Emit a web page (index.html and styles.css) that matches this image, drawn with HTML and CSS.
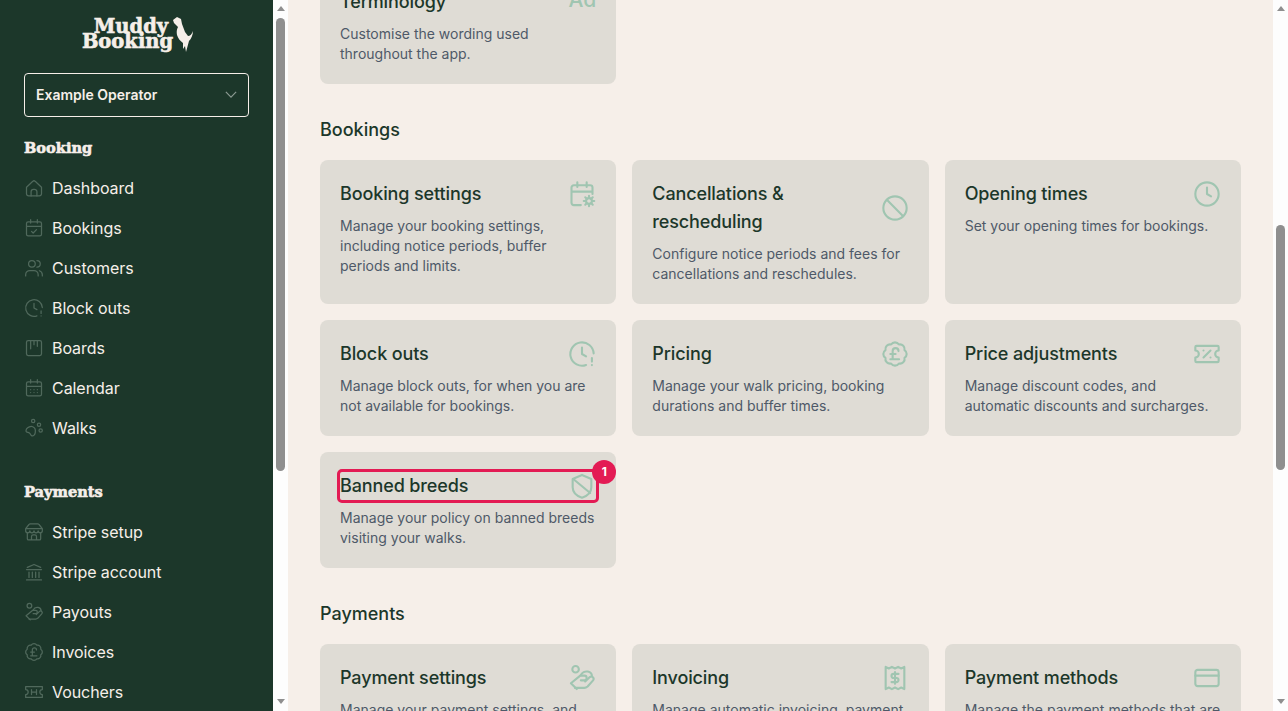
FILE: index.html
```html
<!DOCTYPE html>
<html lang="en">
<head>
  <meta charset="UTF-8" />
  <meta name="viewport" content="width=device-width, initial-scale=1.0"/>
  <title>Settings - Muddy Booking</title>
  <link rel="stylesheet" href="styles.css">
</head>
<body>

<svg class="sprite" xmlns="http://www.w3.org/2000/svg">
  <symbol id="i-home" viewBox="0 0 24 24"><path d="M3 11l7.6-7a2 2 0 0 1 2.8 0l7.6 7v8a2.5 2.5 0 0 1-2.5 2.5h-13A2.5 2.5 0 0 1 3 19z"/><path d="M8.5 21.500v-5a3 3 0 0 1 3-3h1a3 3 0 0 1 3 3v5"/></symbol>
  <symbol id="i-calendar-check" viewBox="0 0 24 24"><rect x="3" y="4.500" width="18" height="17" rx="2"/><path d="M8 2v4M16 2v4M3 10h18M9 16l2 2 4-4"/></symbol>
  <symbol id="i-users" viewBox="0 0 24 24"><circle cx="9.500" cy="7" r="4"/><path d="M2 21.500v-1.500a5 5 0 0 1 5-5h5a5 5 0 0 1 5 5v1.500M15.500 3a4 4 0 0 1 0 8M22 21.500v-1.500a5 5 0 0 0-3.500-4.700"/></symbol>
  <symbol id="i-clock-alert" viewBox="0 0 24 24"><path d="M22 11.500A10 10 0 1 0 15.500 21.400"/><path d="M12 6.500v5.500l3.500 2M20.500 15.500v3M20.500 21.500v.01"/></symbol>
  <symbol id="i-board" viewBox="0 0 24 24"><rect x="3" y="3" width="18" height="18" rx="2"/><path d="M8 3v10M12 3v5M16 3v7"/></symbol>
  <symbol id="i-calendar" viewBox="0 0 24 24"><rect x="3" y="4.500" width="18" height="17" rx="2"/><path d="M8 2v4M16 2v4M3 10h18M8 14h.01M12 14h.01M16 14h.01M8 17.500h.01M12 17.500h.01M16 17.500h.01"/></symbol>
  <symbol id="i-paw" viewBox="0 0 24 24"><circle cx="11" cy="3.500" r="2"/><circle cx="18" cy="8" r="2"/><circle cx="20" cy="15" r="2"/><path d="M3 13c1.500-2 5-3.500 7.500-2.500 2.500 1 3.500 4 3 7-.4 2.500-2 4.500-4 4-1.500-.4-1.500-2.500-3-3.500-1.500-1-3.500-.5-4-2-.3-1 .2-2 .5-3z"/></symbol>
  <symbol id="i-store" viewBox="0 0 24 24"><path d="M2 8l4-5a2 2 0 0 1 1.500-.8h9A2 2 0 0 1 18 3l4 5v2.500a2.500 2.500 0 0 1-5 0 2.500 2.500 0 0 1-5 0 2.500 2.500 0 0 1-5 0 2.500 2.500 0 0 1-5 0zM2 8h20"/><path d="M4 13v7a1.500 1.500 0 0 0 1.500 1.500h13A1.500 1.500 0 0 0 20 20v-7M9 21.500v-4a2 2 0 0 1 2-2h2a2 2 0 0 1 2 2v4"/></symbol>
  <symbol id="i-bank" viewBox="0 0 24 24"><path d="M3 21.500h18M3 9h18M4 6.500L12 3l8 3.500M6 12v6.500M10 12v6.500M14 12v6.500M18 12v6.500"/></symbol>
  <symbol id="i-hand-coin" viewBox="0 0 24 24"><circle cx="6.500" cy="4.500" r="2.800"/><path d="M2.500 16.500l5 5M2.500 16.500l8-6.500h3.500a2 2 0 0 1 0 4h-3"/><path d="M6 20.500h8c1.200 0 2-.5 2.800-1.200l4.700-5.300a2 2 0 0 0-2.800-2.800l-4 3.800"/><path d="M11 9.500c1-2 3.500-3.500 6-3 2 .4 3.500 2 3.500 4"/></symbol>
  <symbol id="i-pound-badge" viewBox="0 0 24 24"><path d="M3.850 8.620a4 4 0 0 1 4.780-4.770 4 4 0 0 1 6.740 0 4 4 0 0 1 4.780 4.780 4 4 0 0 1 0 6.740 4 4 0 0 1-4.770 4.780 4 4 0 0 1-6.750 0 4 4 0 0 1-4.780-4.770 4 4 0 0 1 0-6.760Z"/><path d="M8 12h4.500M10 16.500V9.500a2.500 2.500 0 0 1 5 0M8 16.500h7.500"/></symbol>
  <symbol id="i-ticket" viewBox="0 0 24 24"><path d="M2 9a3 3 0 0 1 0 6v3.500h20V15a3 3 0 0 1 0-6V5.500H2z"/><path d="M9 9v6M15 9v6M9 12h6"/></symbol>
  <symbol id="i-calendar-gear" viewBox="0 0 24 24"><path d="M8 2v4M16 2v4M3 10h18M11 21.500H5a2 2 0 0 1-2-2V6.500a2 2 0 0 1 2-2h14a2 2 0 0 1 2 2V12"/><circle cx="18" cy="18" r="2.500"/><path d="M18 13.500v2M18 20.500v2M13.500 18h2M20.500 18h2M14.800 14.800l1.400 1.400M19.800 19.800l1.400 1.400M14.800 21.200l1.400-1.400M19.800 16.200l1.400-1.400"/></symbol>
  <symbol id="i-ban" viewBox="0 0 24 24"><circle cx="12" cy="12" r="10"/><path d="M5 5l14 14"/></symbol>
  <symbol id="i-clock" viewBox="0 0 24 24"><circle cx="12" cy="12" r="10"/><path d="M12 6.500V12l3.500 2"/></symbol>
  <symbol id="i-ticket-percent" viewBox="0 0 24 24"><path d="M2 9a3 3 0 0 1 0 6v3a1 1 0 0 0 1 1h18a1 1 0 0 0 1-1v-3a3 3 0 0 1 0-6V6a1 1 0 0 0-1-1H3a1 1 0 0 0-1 1z"/><path d="M9 9h.01M15 9l-6 6M15 15h.01"/></symbol>
  <symbol id="i-shield-off" viewBox="0 0 24 24"><path d="M12 2.500l8 3.500v7c0 4.500-3.500 7.500-8 9-4.500-1.500-8-4.500-8-9V6z"/><path d="M4.500 6L19 18"/></symbol>
  <symbol id="i-receipt" viewBox="0 0 24 24"><path d="M4 2.500l2.670 1.300 2.670-1.300L12 3.800l2.670-1.300 2.670 1.300L20 2.500v19l-2.660-1.300-2.670 1.300L12 20.200l-2.660 1.300-2.670-1.300L4 21.500z"/><path d="M15 8.500h-4.250a1.750 1.750 0 0 0 0 3.500h2.500a1.750 1.750 0 0 1 0 3.500H9M12 7v10"/></symbol>
  <symbol id="i-card" viewBox="0 0 24 24"><rect x="2" y="5" width="20" height="14" rx="2"/><path d="M2 10h20"/></symbol>
</svg>

<div class="app">
  <aside class="sidebar">
    <div class="logo">
      <div class="logo-text">
        <span class="logo-line">Muddy</span>
        <span class="logo-line">Booking</span>
      </div>
      <svg class="logo-dog" viewBox="0 0 21 35"><path d="M1 3l4-3 4 2 1 5 3 8 3 4c2 0 4-2 5-5 0 4-2 8-4 10l-3 11-1-6-2 3v-6c-3-2-5-5-6-8-.5-3-.5-5 1-8L2 6z"/></svg>
    </div>

    <button class="operator-select">
      <span>Example Operator</span>
      <svg class="chevron" viewBox="0 0 14 8"><path d="M1 1l6 6 6-6"/></svg>
    </button>

    <h3 class="nav-title nav-title-first">Booking</h3>
    <nav class="nav-list">
      <a class="nav-item"><svg class="nav-icon"><use href="#i-home"/></svg>Dashboard</a>
      <a class="nav-item"><svg class="nav-icon"><use href="#i-calendar-check"/></svg>Bookings</a>
      <a class="nav-item"><svg class="nav-icon"><use href="#i-users"/></svg>Customers</a>
      <a class="nav-item"><svg class="nav-icon"><use href="#i-clock-alert"/></svg>Block outs</a>
      <a class="nav-item"><svg class="nav-icon"><use href="#i-board"/></svg>Boards</a>
      <a class="nav-item"><svg class="nav-icon"><use href="#i-calendar"/></svg>Calendar</a>
      <a class="nav-item"><svg class="nav-icon"><use href="#i-paw"/></svg>Walks</a>
    </nav>

    <h3 class="nav-title">Payments</h3>
    <nav class="nav-list">
      <a class="nav-item"><svg class="nav-icon"><use href="#i-store"/></svg>Stripe setup</a>
      <a class="nav-item"><svg class="nav-icon"><use href="#i-bank"/></svg>Stripe account</a>
      <a class="nav-item"><svg class="nav-icon"><use href="#i-hand-coin"/></svg>Payouts</a>
      <a class="nav-item"><svg class="nav-icon"><use href="#i-pound-badge"/></svg>Invoices</a>
      <a class="nav-item"><svg class="nav-icon"><use href="#i-ticket"/></svg>Vouchers</a>
    </nav>
  </aside>

  <div class="scrollbar">
    <span class="scroll-arrow scroll-arrow-up"></span>
    <div class="scroll-track">
      <div class="scroll-thumb scroll-thumb-side"></div>
    </div>
    <span class="scroll-arrow scroll-arrow-down"></span>
  </div>

  <main class="main">
    <div class="settings">
      <section class="settings-section">
        <div class="card-grid">
          <div class="card">
            <div class="card-head">
              <h4 class="card-title">Terminology</h4>
              <span class="card-glyph">Ad</span>
            </div>
            <p class="card-text">Customise the wording used throughout the app.</p>
          </div>
        </div>
      </section>

      <section class="settings-section">
        <h2 class="section-title">Bookings</h2>
        <div class="card-grid">
          <div class="card">
            <div class="card-head">
              <h4 class="card-title">Booking settings</h4>
              <svg class="card-icon"><use href="#i-calendar-gear"/></svg>
            </div>
            <p class="card-text">Manage your booking settings, including notice periods, buffer periods and limits.</p>
          </div>
          <div class="card">
            <div class="card-head">
              <h4 class="card-title">Cancellations &amp; rescheduling</h4>
              <svg class="card-icon"><use href="#i-ban"/></svg>
            </div>
            <p class="card-text">Configure notice periods and fees for cancellations and reschedules.</p>
          </div>
          <div class="card">
            <div class="card-head">
              <h4 class="card-title">Opening times</h4>
              <svg class="card-icon"><use href="#i-clock"/></svg>
            </div>
            <p class="card-text">Set your opening times for bookings.</p>
          </div>
          <div class="card">
            <div class="card-head">
              <h4 class="card-title">Block outs</h4>
              <svg class="card-icon"><use href="#i-clock-alert"/></svg>
            </div>
            <p class="card-text">Manage block outs, for when you are not available for bookings.</p>
          </div>
          <div class="card">
            <div class="card-head">
              <h4 class="card-title">Pricing</h4>
              <svg class="card-icon"><use href="#i-pound-badge"/></svg>
            </div>
            <p class="card-text">Manage your walk pricing, booking durations and buffer times.</p>
          </div>
          <div class="card">
            <div class="card-head">
              <h4 class="card-title">Price adjustments</h4>
              <svg class="card-icon"><use href="#i-ticket-percent"/></svg>
            </div>
            <p class="card-text">Manage discount codes, and automatic discounts and surcharges.</p>
          </div>
          <div class="card card-flagged">
            <div class="card-head card-head-flagged">
              <h4 class="card-title">Banned breeds</h4>
              <svg class="card-icon"><use href="#i-shield-off"/></svg>
            </div>
            <p class="card-text">Manage your policy on banned breeds visiting your walks.</p>
            <span class="badge">1</span>
          </div>
        </div>
      </section>

      <section class="settings-section">
        <h2 class="section-title">Payments</h2>
        <div class="card-grid">
          <div class="card">
            <div class="card-head">
              <h4 class="card-title">Payment settings</h4>
              <svg class="card-icon"><use href="#i-hand-coin"/></svg>
            </div>
            <p class="card-text">Manage your payment settings, and payouts.</p>
          </div>
          <div class="card">
            <div class="card-head">
              <h4 class="card-title">Invoicing</h4>
              <svg class="card-icon"><use href="#i-receipt"/></svg>
            </div>
            <p class="card-text">Manage automatic invoicing, payment terms and reminders.</p>
          </div>
          <div class="card">
            <div class="card-head">
              <h4 class="card-title">Payment methods</h4>
              <svg class="card-icon"><use href="#i-card"/></svg>
            </div>
            <p class="card-text">Manage the payment methods that are available.</p>
          </div>
        </div>
      </section>
    </div>
  </main>

  <div class="scrollbar">
    <span class="scroll-arrow scroll-arrow-up"></span>
    <div class="scroll-track">
      <div class="scroll-thumb scroll-thumb-main"></div>
    </div>
    <span class="scroll-arrow scroll-arrow-down"></span>
  </div>
</div>

</body>
</html>
```

FILE: styles.css
```css
* {
  box-sizing: border-box;
}

body {
  margin: 0;
  background-color: #f6efe9;
  font-family: 'Inter', sans-serif;
  color: #1c372a;
}

.sprite {
  display: none;
}

.app {
  display: flex;
  height: 100vh;
  overflow: hidden;
}

/* sidebar */
.sidebar {
  flex: 0 0 273px;
  height: 100%;
  overflow: hidden;
  padding: 15px 24px 0;
  background-color: #1c372a;
  color: #f6efe9;
}

.logo {
  display: flex;
  justify-content: center;
  align-items: flex-start;
  height: 38px;
  margin-bottom: 20px;
  padding-left: 2px;
}

.logo-text {
  display: flex;
  flex-direction: column;
  align-items: flex-end;
  font-family: 'DejaVu Serif', serif;
  font-weight: 700;
  font-size: 19.5px;
  line-height: 15px;
  padding-top: 4px;
  -webkit-text-stroke: 0.6px #f6efe9;
}

.logo-line:first-child {
  padding-right: 5px;
}

.logo-dog {
  flex: none;
  width: 21px;
  height: 35px;
  margin: 2px 0 0 -1px;
  fill: #f6efe9;
}

.operator-select {
  display: flex;
  justify-content: space-between;
  align-items: center;
  width: 100%;
  height: 44px;
  padding: 0 11px 2px;
  border: 1px solid #f6efe9;
  border-radius: 4px;
  background: none;
  color: #f6efe9;
  font-family: 'Inter', sans-serif;
  font-size: 14px;
  font-weight: 600;
}

.chevron {
  width: 12px;
  height: 7px;
  fill: none;
  stroke: #8b9a92;
  stroke-width: 1.4;
}

.nav-title {
  margin: 34px 0 10px;
  font-family: 'DejaVu Serif', serif;
  font-size: 14.6px;
  font-weight: 700;
  line-height: 20px;
  -webkit-text-stroke: 0.6px #f6efe9;
}

.nav-title-first {
  margin-top: 21px;
}

.nav-item {
  display: flex;
  align-items: center;
  gap: 8px;
  height: 40px;
  font-size: 16px;
  letter-spacing: -0.06px;
  color: #f6efe9;
}

.nav-icon {
  flex: none;
  width: 20px;
  height: 20px;
  fill: none;
  stroke: #50695c;
  stroke-width: 1.5;
  stroke-linecap: round;
  stroke-linejoin: round;
}

/* fake scrollbars, the screenshot has classic ones */
.scrollbar {
  display: flex;
  flex-direction: column;
  align-items: center;
  flex: 0 0 15px;
  height: 100%;
  background-color: #fdfdfd;
}

.scroll-arrow {
  flex: none;
  width: 0;
  height: 0;
  border-left: 4.5px solid transparent;
  border-right: 4.5px solid transparent;
}

.scroll-arrow-up {
  margin-top: 6px;
  border-bottom: 5px solid #8f8f8f;
}

.scroll-arrow-down {
  margin-bottom: 7px;
  border-top: 5px solid #8f8f8f;
}

.scroll-track {
  flex: 1;
  width: 9px;
}

.scroll-thumb {
  width: 9px;
  border-radius: 5px;
  background-color: #8f8f8f;
}

.scroll-thumb-side {
  height: 453px;
  margin-top: 7px;
}

.scroll-thumb-main {
  height: 245px;
  margin-top: 214px;
}

/* main area */
.main {
  flex: 1;
  min-width: 0;
  height: 100%;
  overflow: hidden;
}

.settings {
  margin-top: -32px;
  padding: 0 32px;
}

.settings-section {
  margin-bottom: 32px;
}

.section-title {
  margin: 0 0 16px;
  font-size: 18px;
  font-weight: 500;
  line-height: 28px;
}

.card-grid {
  display: grid;
  grid-template-columns: repeat(3, 1fr);
  gap: 16px;
}

.card {
  position: relative;
  padding: 20px;
  border-radius: 8px;
  background-color: #dfdcd5;
}

.card-head {
  display: flex;
  justify-content: space-between;
  align-items: center;
  gap: 16px;
  margin-bottom: 8px;
}

.card-head-flagged {
  border-radius: 2px;
  outline: 3px solid #e31b54;
}

.card-title {
  margin: 0;
  font-size: 18px;
  font-weight: 500;
  line-height: 28px;
  letter-spacing: -0.12px;
}

.card-icon {
  flex: none;
  width: 28px;
  height: 28px;
  fill: none;
  stroke: #a0c5b1;
  stroke-width: 1.8;
  stroke-linecap: round;
  stroke-linejoin: round;
}

.card-glyph {
  margin-bottom: 4px;
  font-size: 21px;
  font-weight: 500;
  line-height: 24px;
  color: #a0c5b1;
}

.card-text {
  margin: 0;
  font-size: 14px;
  line-height: 20px;
  color: #4e5968;
}

.badge {
  position: absolute;
  top: 8px;
  right: 0;
  width: 24px;
  height: 24px;
  border-radius: 50%;
  background-color: #e31b54;
  color: #fff;
  font-size: 12px;
  font-weight: 700;
  line-height: 24px;
  text-align: center;
}
```
